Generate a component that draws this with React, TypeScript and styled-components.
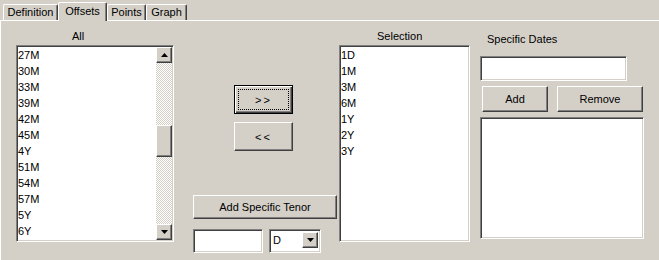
import { createGlobalStyle, css, styled } from "styled-components";

const GlobalStyle = createGlobalStyle`
  html, body {
    margin: 0;
    padding: 0;
    background: #d4d0c8;
    overflow: hidden;
  }
  body {
    font-family: "Liberation Sans", Arial, sans-serif;
    font-size: 11px;
    color: #000;
  }
`;

const sunken = css`
  box-sizing: border-box;
  background: #fff;
  border: 1px solid;
  border-color: #808080 #fff #fff #808080;
  box-shadow: inset 1px 1px #404040, inset -1px -1px #d4d0c8;
  padding: 1px;
`;

const raised = css`
  box-sizing: border-box;
  background: #d4d0c8;
  border: 1px solid;
  border-color: #fff #404040 #404040 #fff;
  box-shadow: inset -1px -1px #808080, inset 1px 1px #d4d0c8;
`;

const Window = styled.div`
  width: 659px;
  height: 260px;
`;

const TabStrip = styled.div`
  display: flex;
  align-items: flex-end;
  height: 20px;
  padding-left: 3px;
`;

const Tab = styled.div<{ $active?: boolean; $w: number }>`
  box-sizing: border-box;
  width: ${(p) => p.$w}px;
  height: ${(p) => (p.$active ? 19 : 16)}px;
  margin-bottom: ${(p) => (p.$active ? -1 : 0)}px;
  position: relative;
  z-index: ${(p) => (p.$active ? 1 : 0)};
  background: #d4d0c8;
  border: 1px solid;
  border-bottom: none;
  border-color: #fff #404040 #d4d0c8 #fff;
  border-radius: 2px 2px 0 0;
  box-shadow: inset -1px 0 #808080;
  display: flex;
  justify-content: center;
  padding-top: ${(p) => (p.$active ? 2 : 1)}px;
  line-height: 13px;
`;

const Panel = styled.div`
  box-sizing: border-box;
  height: 240px;
  border-top: 1px solid #fff;
  border-left: 1px solid #fff;
  display: flex;
  padding-left: 15px;
`;

const Column = styled.div<{ $w: number; $gap?: number }>`
  display: flex;
  flex-direction: column;
  width: ${(p) => p.$w}px;
  margin-left: ${(p) => p.$gap ?? 0}px;
`;

const Caption = styled.div<{ $indent: number; $top?: number }>`
  box-sizing: border-box;
  height: 24px;
  padding-top: ${(p) => p.$top ?? 9}px;
  padding-left: ${(p) => p.$indent}px;
  line-height: 13px;
  white-space: nowrap;
`;

const ListBox = styled.div<{ $h: number; $w?: number }>`
  ${sunken};
  display: flex;
  height: ${(p) => p.$h}px;
  width: ${(p) => (p.$w ? `${p.$w}px` : "100%")};
  overflow: hidden;
`;

const Items = styled.div`
  flex: 1;
`;

const Item = styled.div`
  height: 16px;
  line-height: 16px;
`;

const ScrollBar = styled.div`
  display: flex;
  flex-direction: column;
  width: 16px;
`;

const ArrowBtn = styled.div`
  ${raised};
  height: 16px;
  display: flex;
  align-items: center;
  justify-content: center;
`;

const Track = styled.div`
  flex: 1;
  background-color: #fff;
  background-image: repeating-conic-gradient(#d4d0c8 0 25%, #fff 0 50%);
  background-size: 2px 2px;
`;

const Thumb = styled.div<{ $top: number }>`
  ${raised};
  height: 32px;
  margin-top: ${(p) => p.$top}px;
`;

const Button = styled.button<{ $w: number; $h: number; $default?: boolean; $spaced?: boolean }>`
  ${raised};
  width: ${(p) => p.$w}px;
  height: ${(p) => p.$h}px;
  font: inherit;
  color: #000;
  padding: 0;
  position: relative;
  letter-spacing: ${(p) => (p.$spaced ? "2px" : "normal")};
  ${(p) =>
    p.$default &&
    css`
      border-color: #000;
      box-shadow: inset 1px 1px #fff, inset -1px -1px #404040,
        inset -2px -2px #808080;
      &::after {
        content: "";
        position: absolute;
        inset: 3px;
        border: 1px dotted #000;
      }
    `}
`;

const ArrowGroup = styled.div`
  display: flex;
  flex-direction: column;
  gap: 8px;
  margin: 64px 0 0 42px;
`;

const TenorArea = styled.div`
  display: flex;
  flex-direction: column;
  gap: 10px;
  margin-top: 44px;
  margin-left: 1px;
`;

const InputRow = styled.div`
  display: flex;
  gap: 6px;
`;

const TextField = styled.div<{ $w: number; $h: number; $top?: number }>`
  ${sunken};
  width: ${(p) => p.$w}px;
  height: ${(p) => p.$h}px;
  margin-top: ${(p) => p.$top ?? 0}px;
`;

const Combo = styled.div`
  ${sunken};
  width: 52px;
  height: 24px;
  display: flex;
  align-items: stretch;
  padding: 2px;
`;

const ComboText = styled.div`
  flex: 1;
  line-height: 17px;
  padding-left: 1px;
`;

const ComboBtn = styled(ArrowBtn)`
  width: 16px;
  height: auto;
  margin-bottom: 2px;
`;

const DatesButtons = styled.div`
  display: flex;
  gap: 9px;
  margin: 5px 0 5px 2px;
`;

const Triangle = ({ down }: { down?: boolean }) => (
  <svg width="7" height="4" viewBox="0 0 7 4">
    <polygon points={down ? "0,0 7,0 3.5,4" : "0,4 7,4 3.5,0"} fill="#000" />
  </svg>
);

const allOffsets = ["27M", "30M", "33M", "39M", "42M", "45M", "4Y", "51M", "54M", "57M", "5Y", "6Y"];
const selected = ["1D", "1M", "3M", "6M", "1Y", "2Y", "3Y"];

export default function App() {
  return (
    <Window>
      <GlobalStyle />
      <TabStrip>
        <Tab $w={55}>Definition</Tab>
        <Tab $w={49} $active>Offsets</Tab>
        <Tab $w={39}>Points</Tab>
        <Tab $w={41}>Graph</Tab>
      </TabStrip>
      <Panel>
        <Column $w={158}>
          <Caption $indent={56}>All</Caption>
          <ListBox $h={197}>
            <Items>
              {allOffsets.map((o) => (
                <Item key={o}>{o}</Item>
              ))}
            </Items>
            <ScrollBar>
              <ArrowBtn>
                <Triangle />
              </ArrowBtn>
              <Track>
                <Thumb $top={62} />
              </Track>
              <ArrowBtn>
                <Triangle down />
              </ArrowBtn>
            </ScrollBar>
          </ListBox>
        </Column>

        <Column $w={145} $gap={18}>
          <ArrowGroup>
            <Button $w={59} $h={29} $default $spaced>
              &gt;&gt;
            </Button>
            <Button $w={59} $h={29} $spaced>
              &lt;&lt;
            </Button>
          </ArrowGroup>
          <TenorArea>
            <Button $w={144} $h={24}>
              Add Specific Tenor
            </Button>
            <InputRow>
              <TextField $w={70} $h={24} />
              <Combo>
                <ComboText>D</ComboText>
                <ComboBtn>
                  <Triangle down />
                </ComboBtn>
              </Combo>
            </InputRow>
          </TenorArea>
        </Column>

        <Column $w={131} $gap={2}>
          <Caption $indent={38}>Selection</Caption>
          <ListBox $h={197}>
            <Items>
              {selected.map((o) => (
                <Item key={o}>{o}</Item>
              ))}
            </Items>
          </ListBox>
        </Column>

        <Column $w={164} $gap={10}>
          <Caption $indent={7} $top={12}>
            Specific Dates
          </Caption>
          <TextField $w={147} $h={25} $top={11} />
          <DatesButtons>
            <Button $w={66} $h={26}>
              Add
            </Button>
            <Button $w={86} $h={26}>
              Remove
            </Button>
          </DatesButtons>
          <ListBox $h={122} $w={164} />
        </Column>
      </Panel>
    </Window>
  );
}
